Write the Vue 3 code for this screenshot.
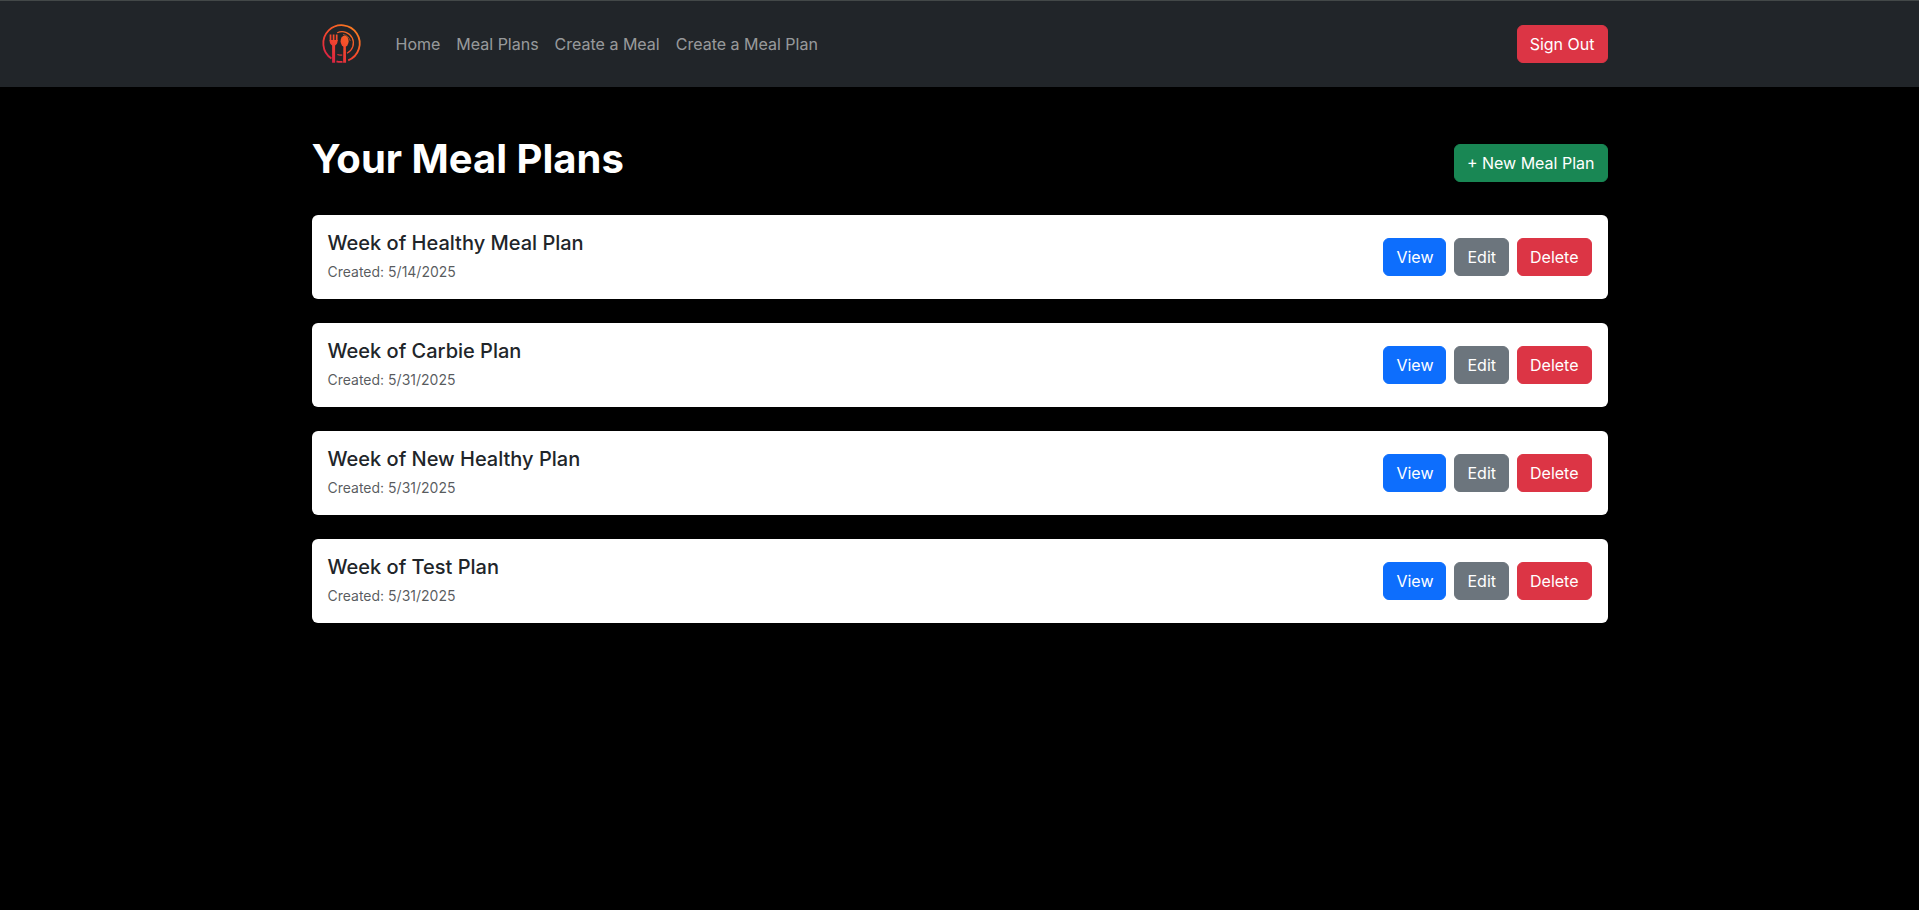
<script setup>
const links = ['Home', 'Meal Plans', 'Create a Meal', 'Create a Meal Plan']

const plans = [
  { id: 1, title: 'Week of Healthy Meal Plan', created: '5/14/2025' },
  { id: 2, title: 'Week of Carbie Plan', created: '5/31/2025' },
  { id: 3, title: 'Week of New Healthy Plan', created: '5/31/2025' },
  { id: 4, title: 'Week of Test Plan', created: '5/31/2025' },
]
</script>

<template>
  <div class="page">
    <header class="navbar">
      <div class="container navbar-inner">
        <a class="brand" href="#" aria-label="Home page">
          <svg class="logo" viewBox="0 0 60 60" fill="none" aria-hidden="true">
            <defs>
              <linearGradient id="flame" gradientUnits="userSpaceOnUse" x1="15" y1="46" x2="43" y2="14">
                <stop offset="0" stop-color="#d81f45" />
                <stop offset="0.5" stop-color="#f4492c" />
                <stop offset="1" stop-color="#fb7d20" />
              </linearGradient>
            </defs>
            <g stroke="url(#flame)">
              <path d="M19.4 44.5 A18.2 18.2 0 1 1 36.2 46.3" stroke-width="1.8" />
              <path d="M24.5 47.3 Q27.5 48.3 30.5 47.8" stroke-width="1.8" />
              <path d="M25.2 18.8 A11.2 11.2 0 0 1 35 39.2" stroke-width="1.2" />
              <path d="M31 20.4 A9.2 9.2 0 0 1 38.3 27" stroke-width="0.6" />
              <path d="M25.4 40.4 Q27.5 41.3 30.3 41" stroke-width="1.1" />
              <path d="M18.5 20.5 V27 M21.6 20.5 V27 M24.7 20.5 V27" stroke-width="1.7" />
            </g>
            <g fill="url(#flame)">
              <path d="M17.6 26 H25.6 Q25.7 30.2 23.1 31.4 V48.7 H20.1 V31.4 Q17.5 30.2 17.6 26 Z" />
              <ellipse cx="32.6" cy="27.2" rx="4" ry="5.6" />
              <path d="M31.4 31 H33.8 L34.1 48.7 H31.1 Z" />
            </g>
          </svg>
        </a>
        <nav class="links" aria-label="Main">
          <a v-for="link in links" :key="link" class="link" href="#">{{ link }}</a>
        </nav>
        <button type="button" class="btn danger">Sign Out</button>
      </div>
    </header>

    <main class="container content">
      <div class="heading">
        <h1>Your Meal Plans</h1>
        <a class="btn success" href="#">+ New Meal Plan</a>
      </div>

      <div class="plans">
        <article v-for="plan in plans" :key="plan.id" class="card">
          <div>
            <h2>{{ plan.title }}</h2>
            <p><small>Created: {{ plan.created }}</small></p>
          </div>
          <div class="actions">
            <button type="button" class="btn primary">View</button>
            <button type="button" class="btn secondary">Edit</button>
            <button type="button" class="btn danger">Delete</button>
          </div>
        </article>
      </div>
    </main>
  </div>
</template>

<style>
body {
  margin: 0;
  background: #000;
}
</style>

<style scoped>
.page,
.page * {
  box-sizing: border-box;
}

.page {
  min-height: 100vh;
  background: #000;
  color: #212529;
  font-family: Inter, "Liberation Sans", sans-serif;
  font-size: 16px;
  line-height: 24px;
}

.container {
  width: 100%;
  max-width: 1320px;
  margin: 0 auto;
  padding: 0 12px;
}

.navbar {
  border-top: 1px solid #434848;
  padding: 8px 0;
  background: #212529;
}

.navbar-inner {
  display: flex;
  align-items: center;
}

.brand {
  display: flex;
  margin-right: 16px;
  padding: 5px 0;
}

.logo {
  width: 60px;
  height: 60px;
}

.links {
  display: flex;
  flex: 1;
}

.link {
  padding: 8px;
  color: rgba(255, 255, 255, 0.55);
  text-decoration: none;
}

.btn {
  padding: 6px 12px;
  border: 1px solid transparent;
  border-radius: 6px;
  color: #fff;
  font: inherit;
  text-decoration: none;
  white-space: nowrap;
  cursor: pointer;
}

.primary {
  border-color: #0d6efd;
  background: #0d6efd;
}

.secondary {
  border-color: #6c757d;
  background: #6c757d;
}

.danger {
  border-color: #dc3545;
  background: #dc3545;
}

.success {
  border-color: #198754;
  background: #198754;
}

.content {
  padding-top: 48px;
  padding-bottom: 48px;
}

.heading {
  display: flex;
  align-items: center;
  justify-content: space-between;
  margin-bottom: 24px;
}

h1 {
  margin: 0 0 8px;
  color: #fff;
  font-size: 40px;
  font-weight: 700;
  line-height: 48px;
}

.plans {
  display: grid;
  gap: 24px;
}

.card {
  display: flex;
  align-items: center;
  justify-content: space-between;
  padding: 16px;
  border-radius: 6px;
  background: #fff;
}

h2 {
  margin: 0 0 4px;
  font-size: 20px;
  font-weight: 500;
  line-height: 24px;
}

p {
  margin: 0;
  color: rgba(33, 37, 41, 0.75);
}

small {
  font-size: 14px;
  line-height: 16px;
}

.actions {
  display: flex;
  gap: 8px;
}
</style>
